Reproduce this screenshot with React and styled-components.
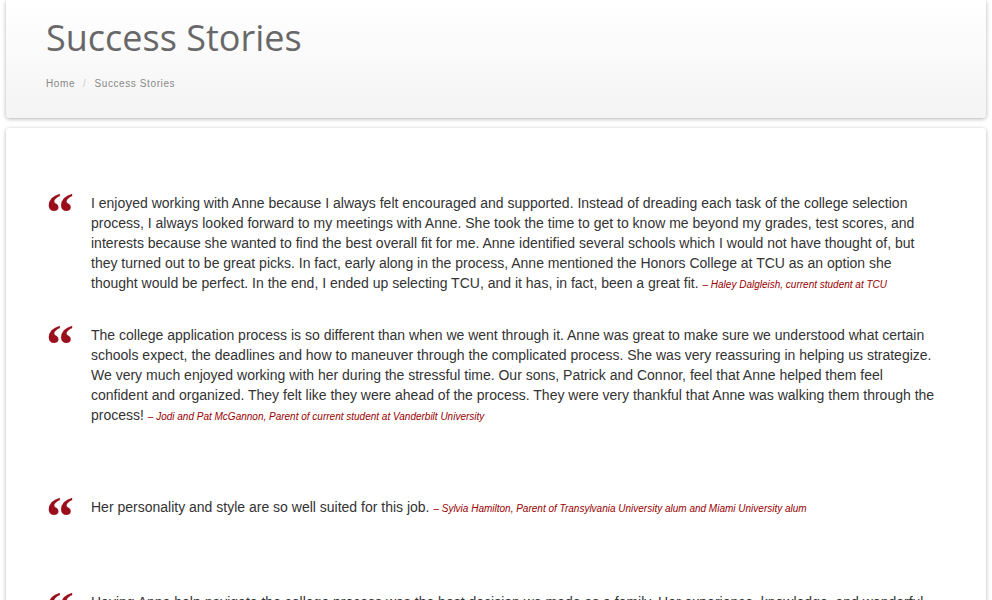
import React from "react";
import styled, { createGlobalStyle } from "styled-components";

const GlobalStyle = createGlobalStyle`
    html, body {
        margin: 0;
        padding: 0;
        background: #fff;
    }
`;

const Page = styled.div`
    padding: 0 6px;
    display: flex;
    flex-direction: column;
    gap: 10px;
`;

const Header = styled.div`
    height: 118px;
    box-sizing: border-box;
    padding: 14px 40px 0 40px;
    background: linear-gradient(to bottom, #ffffff 0%, #f4f4f4 100%);
    border-radius: 0 0 4px 4px;
    box-shadow: 0 1px 4px rgba(0, 0, 0, 0.3);
`;

const Title = styled.h1`
    margin: 0;
    font-family: "Open Sans", "DejaVu Sans", sans-serif;
    font-weight: 400;
    font-size: 36px;
    line-height: 48px;
    color: #686868;
`;

const Breadcrumb = styled.div`
    margin-top: 16px;
    display: flex;
    gap: 8px;
    font-family: "Liberation Sans", Arial, sans-serif;
    font-size: 10px;
    letter-spacing: 0.6px;
    color: #888;
`;

const Divider = styled.span`
    color: #ccc;
`;

const Card = styled.div`
    min-height: 600px;
    padding: 65px 50px 40px 40px;
    background: #fff;
    border-radius: 4px 4px 0 0;
    box-shadow: 0 1px 4px rgba(0, 0, 0, 0.3);
`;

const Quote = styled.div`
    display: flex;
    align-items: flex-start;
    margin-bottom: ${(p) => p.gap}px;
`;

const Mark = styled.div`
    width: 45px;
    flex-shrink: 0;
    margin-top: -8px;
    font-family: "Liberation Serif", "Times New Roman", serif;
    font-weight: 700;
    font-size: 56px;
    line-height: 56px;
    height: 30px;
    color: #9b0f1c;
`;

const Text = styled.p`
    margin: 0;
    font-family: "Liberation Sans", Arial, sans-serif;
    font-size: 14px;
    line-height: 20px;
    color: #333;
`;

const Author = styled.em`
    font-size: 10px;
    color: #990000;
`;

const quotes = [
    {
        text: "I enjoyed working with Anne because I always felt encouraged and supported. Instead of dreading each task of the college selection process, I always looked forward to my meetings with Anne. She took the time to get to know me beyond my grades, test scores, and interests because she wanted to find the best overall fit for me. Anne identified several schools which I would not have thought of, but they turned out to be great picks. In fact, early along in the process, Anne mentioned the Honors College at TCU as an option she thought would be perfect. In the end, I ended up selecting TCU, and it has, in fact, been a great fit.",
        author: "– Haley Dalgleish, current student at TCU",
        gap: 30,
    },
    {
        text: "The college application process is so different than when we went through it. Anne was great to make sure we understood what certain schools expect, the deadlines and how to maneuver through the complicated process. She was very reassuring in helping us strategize. We very much enjoyed working with her during the stressful time. Our sons, Patrick and Connor, feel that Anne helped them feel confident and organized. They felt like they were ahead of the process. They were very thankful that Anne was walking them through the process!",
        author: "– Jodi and Pat McGannon, Parent of current student at Vanderbilt University",
        gap: 70,
    },
    {
        text: "Her personality and style are so well suited for this job.",
        author: "– Sylvia Hamilton, Parent of Transylvania University alum and Miami University alum",
        gap: 73,
    },
    {
        text: "Having Anne help navigate the college process was the best decision we made as a family. Her experience, knowledge, and wonderful personality made the whole process so much less stressful for our daughter and for us.",
        author: "– Parent",
        gap: 32,
    },
];

export default function App() {
    return (
        <>
            <GlobalStyle />
            <Page>
                <Header>
                    <Title>Success Stories</Title>
                    <Breadcrumb>
                        <span>Home</span>
                        <Divider>/</Divider>
                        <span>Success Stories</span>
                    </Breadcrumb>
                </Header>
                <Card>
                    {quotes.map((q, i) => (
                        <Quote key={i} gap={q.gap}>
                            <Mark>“</Mark>
                            <Text>
                                {q.text} <Author>{q.author}</Author>
                            </Text>
                        </Quote>
                    ))}
                </Card>
            </Page>
        </>
    );
}
